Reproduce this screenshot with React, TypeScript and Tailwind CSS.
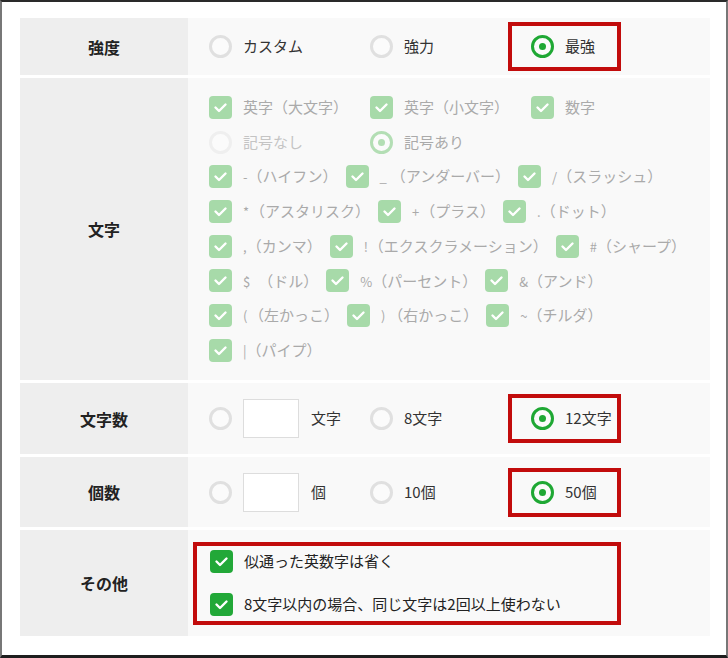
import React from "react";

const FONT = { fontFamily: '"Noto Sans CJK JP", "Noto Sans", sans-serif' };

function Check({ muted = false }: { muted?: boolean }) {
  return (
    <span
      className={`flex h-[23px] w-[23px] shrink-0 items-center justify-center rounded-[4px] ${
        muted ? "bg-[#a7daa9]" : "bg-[#22a838]"
      }`}
    >
      <svg width="23" height="23" viewBox="0 0 23 23" fill="none">
        <polyline
          points="6.5,11.5 10,15 16.5,8.5"
          stroke="white"
          strokeWidth="2.4"
          strokeLinecap="round"
          strokeLinejoin="round"
        />
      </svg>
    </span>
  );
}

function Radio({ state }: { state: "off" | "on" | "muted-off" | "muted-on" }) {
  const ring =
    state === "on"
      ? "border-[#1fa834]"
      : state === "muted-on"
        ? "border-[#b3deb4]"
        : state === "muted-off"
          ? "border-[#efefef]"
          : "border-[#e0e0e0]";
  return (
    <span
      className={`flex h-[23px] w-[23px] shrink-0 items-center justify-center rounded-full border-[3px] bg-[#fbfbfb] ${ring}`}
    >
      {state === "on" && <span className="h-[7px] w-[7px] rounded-full bg-[#1fa834]" />}
      {state === "muted-on" && <span className="h-[7px] w-[7px] rounded-full bg-[#b3deb4]" />}
    </span>
  );
}

function Label({ children }: { children: React.ReactNode }) {
  return (
    <div className="flex w-[168px] shrink-0 items-center justify-center bg-[#eeeeee] text-[16px] font-bold text-[#222]">
      {children}
    </div>
  );
}

function Option({ radio, text }: { radio: "off" | "on"; text: string }) {
  return (
    <div className="flex items-center gap-[11px]">
      <Radio state={radio} />
      <span className="text-[15px] text-[#333]">{text}</span>
    </div>
  );
}

function Picked({ text }: { text: string }) {
  return (
    <div className="flex h-[49px] w-[113px] shrink-0 items-center border-4 border-[#c20c0c] pl-[19px]">
      <Option radio="on" text={text} />
    </div>
  );
}

function CharItem({ sym, name, pad }: { sym: string; name: string; pad: string }) {
  return (
    <div className="mr-[8px] flex items-center gap-[11px]">
      <Check muted />
      <span className="whitespace-nowrap text-[15px] text-[#aaaaaa]">
        <span className={`text-[13px] ${pad}`}>{sym}</span>
        {name}
      </span>
    </div>
  );
}

// symbol, name, extra space after the symbol
const symbolLines: [string, string, string][][] = [
  [
    ["-", "（ハイフン）", ""],
    ["_", "（アンダーバー）", "mr-[4px]"],
    ["/", "（スラッシュ）", ""],
  ],
  [
    ["*", "（アスタリスク）", "mr-[1px]"],
    ["+", "（プラス）", "mr-[1px]"],
    [".", "（ドット）", ""],
  ],
  [
    [",", "（カンマ）", ""],
    ["!", "（エクスクラメーション）", "mr-[1px]"],
    ["#", "（シャープ）", ""],
  ],
  [
    ["$", "（ドル）", "mr-[8px]"],
    ["%", "（パーセント）", ""],
    ["&", "（アンド）", ""],
  ],
  [
    ["(", "（左かっこ）", "mr-[9px]"],
    [")", "（右かっこ）", "mr-[3px]"],
    ["~", "（チルダ）", ""],
  ],
  [["|", "（パイプ）", ""]],
];

export default function App() {
  return (
    <div
      style={FONT}
      className="h-[658px] w-[728px] border-2 border-b-[3px] border-t-[#2a2a2a] border-b-[#1e1e1e] border-l-[#777] border-r-[#777] bg-white pl-[18px] pt-[16px]"
    >
      <div className="flex w-[690px] flex-col gap-[3px]">
        {/* 強度 */}
        <div className="flex h-[57px]">
          <Label>強度</Label>
          <div className="flex flex-1 items-center bg-[#f9f9f9] pl-[21px]">
            <div className="w-[161px]">
              <Option radio="off" text="カスタム" />
            </div>
            <div className="w-[138px]">
              <Option radio="off" text="強力" />
            </div>
            <Picked text="最強" />
          </div>
        </div>

        {/* 文字 */}
        <div className="flex h-[302px]">
          <Label>文字</Label>
          <div className="flex flex-1 flex-col bg-[#f9f9f9] pl-[21px] pt-[12px]">
            <div className="flex h-[34.7px] items-center">
              {["英字（大文字）", "英字（小文字）", "数字"].map((t) => (
                <div key={t} className="flex w-[161px] items-center gap-[11px]">
                  <Check muted />
                  <span className="text-[15px] text-[#aaaaaa]">{t}</span>
                </div>
              ))}
            </div>
            <div className="flex h-[34.7px] items-center">
              <div className="flex w-[161px] items-center gap-[11px]">
                <Radio state="muted-off" />
                <span className="text-[15px] text-[#c4c4c4]">記号なし</span>
              </div>
              <div className="flex w-[161px] items-center gap-[11px]">
                <Radio state="muted-on" />
                <span className="text-[15px] text-[#aaaaaa]">記号あり</span>
              </div>
            </div>
            {symbolLines.map((line, i) => (
              <div key={i} className="flex h-[34.7px] items-center">
                {line.map(([s, n, p]) => (
                  <CharItem key={n} sym={s} name={n} pad={p} />
                ))}
              </div>
            ))}
          </div>
        </div>

        {/* 文字数 */}
        <div className="flex h-[71px]">
          <Label>文字数</Label>
          <div className="flex flex-1 items-center bg-[#f9f9f9] pl-[21px]">
            <div className="flex w-[161px] items-center">
              <Radio state="off" />
              <span className="ml-[11px] h-[39px] w-[56px] border border-[#dddddd] bg-white" />
              <span className="ml-[12px] text-[15px] text-[#333]">文字</span>
            </div>
            <div className="w-[138px]">
              <Option radio="off" text="8文字" />
            </div>
            <Picked text="12文字" />
          </div>
        </div>

        {/* 個数 */}
        <div className="flex h-[70px]">
          <Label>個数</Label>
          <div className="flex flex-1 items-center bg-[#f9f9f9] pl-[21px]">
            <div className="flex w-[161px] items-center">
              <Radio state="off" />
              <span className="ml-[11px] h-[39px] w-[56px] border border-[#dddddd] bg-white" />
              <span className="ml-[12px] text-[15px] text-[#333]">個</span>
            </div>
            <div className="w-[138px]">
              <Option radio="off" text="10個" />
            </div>
            <Picked text="50個" />
          </div>
        </div>

        {/* その他 */}
        <div className="flex h-[106px]">
          <Label>その他</Label>
          <div className="flex flex-1 items-center bg-[#f9f9f9] pl-[5px]">
            <div className="flex h-[83px] w-[428px] flex-col justify-center gap-[20px] border-4 border-[#c20c0c] pl-[13px]">
              <div className="flex items-center gap-[11px]">
                <Check />
                <span className="text-[15px] text-[#222]">似通った英数字は省く</span>
              </div>
              <div className="flex items-center gap-[11px]">
                <Check />
                <span className="text-[15px] text-[#222]">8文字以内の場合、同じ文字は2回以上使わない</span>
              </div>
            </div>
          </div>
        </div>
      </div>
    </div>
  );
}
